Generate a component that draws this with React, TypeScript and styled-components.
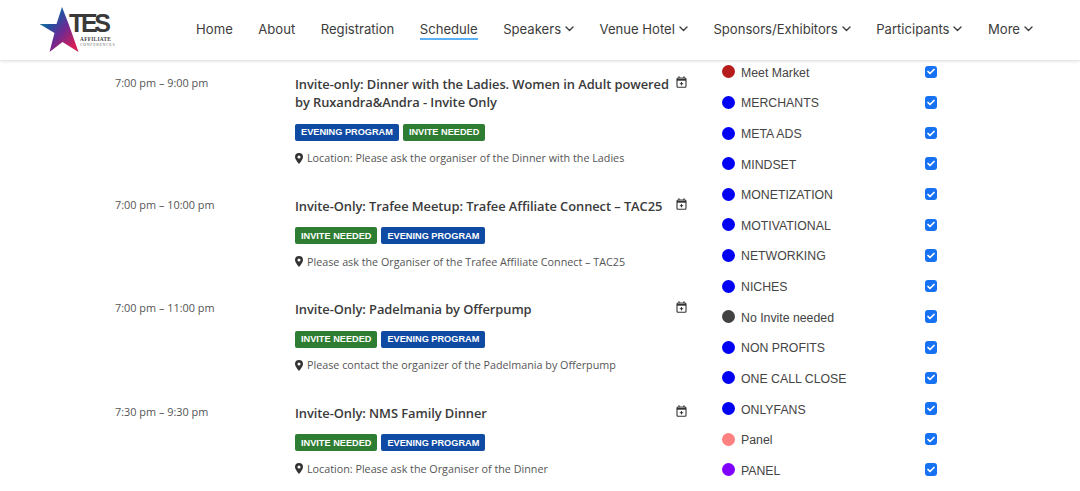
import React from "react";
import styled, { createGlobalStyle } from "styled-components";

const Global = createGlobalStyle`
  html, body { margin: 0; padding: 0; background: #fff; overflow: hidden; }
  #root { width: 1080px; height: 491px; overflow: hidden; }
`;

const Page = styled.div`
  display: flex;
  flex-direction: column;
  height: 491px;
  overflow: hidden;
`;

const Header = styled.header`
  flex: none;
  height: 60px;
  display: flex;
  align-items: center;
  padding: 0 47px 0 38px;
  background: #fff;
  box-shadow: 0 1px 3px rgba(0, 0, 0, 0.16);
  position: relative;
  z-index: 2;
`;

const LogoSvg = styled.svg`
  flex: none;
  width: 84px;
  height: 60px;
`;

const Nav = styled.nav`
  flex: 1;
  display: flex;
  justify-content: flex-end;
  gap: 25.5px;
`;

const NavItem = styled.a<{ $active?: boolean }>`
  display: inline-flex;
  align-items: center;
  gap: 4px;
  height: 20px;
  font: 400 13.1px "Inter", "Liberation Sans", sans-serif;
  color: #3c3c3c;
  white-space: nowrap;
  border-bottom: 2px solid ${(p) => (p.$active ? "#5cb0f5" : "transparent")};
  box-sizing: border-box;
`;

const Main = styled.main`
  flex: 1;
  min-height: 0;
  display: flex;
  padding-left: 115px;
  overflow: hidden;
`;

const Schedule = styled.section`
  flex: none;
  width: 571.5px;
  padding-top: 14.5px;
`;

const Row = styled.article`
  display: grid;
  grid-template-columns: 180px 1fr 13px;
  padding-bottom: 30.4px;
`;

const Time = styled.div`
  font: 400 10.9px/16px "Open Sans", sans-serif;
  color: #555;
  white-space: nowrap;
`;

const Details = styled.div`
  min-width: 0;
`;

const Title = styled.h3`
  margin: 0;
  font: 600 12.9px/18.6px "Open Sans", sans-serif;
  letter-spacing: -0.07px;
  color: #3a3a3a;
`;

const Badges = styled.div`
  display: flex;
  gap: 4px;
  margin-top: 12.3px;
`;

const Badge = styled.span<{ $tone: "blue" | "green" }>`
  display: inline-flex;
  align-items: center;
  height: 17px;
  padding: 0 6px;
  border-radius: 2px;
  background: ${(p) => (p.$tone === "blue" ? "#0f4aa3" : "#2e7d32")};
  color: #fff;
  font: 700 9.2px "Liberation Sans", sans-serif;
  white-space: nowrap;
`;

const Location = styled.p`
  display: flex;
  align-items: center;
  gap: 4px;
  margin: 9.2px 0 0;
  font: 400 10.75px/16px "Open Sans", sans-serif;
  color: #555;
  white-space: nowrap;
`;

const PinIcon = styled.svg`
  flex: none;
  width: 8px;
  height: 11px;
  fill: #333;
`;

const CalIcon = styled.svg`
  justify-self: end;
  margin-top: 1px;
  width: 11px;
  height: 12px;
`;

const Sidebar = styled.aside`
  flex: none;
  width: 215px;
  margin-left: 35.5px;
  margin-top: -2.5px;
  display: flex;
  flex-direction: column;
`;

const FilterRow = styled.label`
  flex: none;
  height: 30.62px;
  display: flex;
  align-items: center;
  gap: 6px;
  font: 400 12.3px "Liberation Sans", sans-serif;
  color: #444;
`;

const Dot = styled.span<{ $color: string }>`
  flex: none;
  width: 13px;
  height: 13px;
  border-radius: 50%;
  background: ${(p) => p.$color};
  margin-top: -2px;
`;

const FilterName = styled.span`
  flex: 1;
`;

const Check = styled.span`
  flex: none;
  width: 12.5px;
  height: 12.5px;
  margin-top: -2px;
  border-radius: 3px;
  background: #1672f3;
  display: flex;
  align-items: center;
  justify-content: center;
`;

const Chevron = () => (
  <svg width="9" height="6" viewBox="0 0 9 6" fill="none" stroke="#3c3c3c" strokeWidth="1.4" strokeLinecap="round" strokeLinejoin="round">
    <path d="M1 1l3.5 3.5L8 1" />
  </svg>
);

const Pin = () => (
  <PinIcon viewBox="0 0 8 11">
    <path fillRule="evenodd" d="M4 0a4 4 0 0 1 4 4c0 2.6-4 7-4 7S0 6.600 0 4a4 4 0 0 1 4-4zm0 2.500a1.500 1.500 0 1 0 0 3 1.500 1.500 0 0 0 0-3z" />
  </PinIcon>
);

const Cal = () => (
  <CalIcon viewBox="0 0 11 12" fill="none" stroke="#333">
    <rect x="1" y="2" width="9" height="9.300" rx="1" strokeWidth="1.100" />
    <path d="M1 3.800h9" strokeWidth="1.800" />
    <path d="M3 .3v2M8 .3v2" strokeWidth="1.100" />
    <path d="M5.500 6v3.400M3.800 7.700h3.400" strokeWidth="1" />
  </CalIcon>
);

const Logo = () => (
  <LogoSvg viewBox="0 0 84 60">
    <defs>
      <linearGradient id="star" x1="5%" y1="12%" x2="85%" y2="90%">
        <stop offset="0" stopColor="#1f9aa0" />
        <stop offset="0.3" stopColor="#1c55a0" />
        <stop offset="0.6" stopColor="#6a2a94" />
        <stop offset="1" stopColor="#d41f55" />
      </linearGradient>
    </defs>
    <path d="M24 7l7 18 9.500 27-16-10-13 10 5-19-15-9h17z" fill="url(#star)" />
    <text x="31" y="32" fontFamily="Liberation Sans, sans-serif" fontWeight="700" fontSize="25" letterSpacing="-3.300" fill="#3a3a3a">TES</text>
    <text x="42" y="41" fontFamily="Liberation Serif, serif" fontWeight="700" fontSize="5.300" letterSpacing="0.300" fill="#444">AFFILIATE</text>
    <text x="42" y="46" fontFamily="Liberation Serif, serif" fontSize="3.800" letterSpacing="0.750" fill="#666">CONFERENCES</text>
  </LogoSvg>
);

const nav: { label: string; active?: boolean; menu?: boolean }[] = [
  { label: "Home" },
  { label: "About" },
  { label: "Registration" },
  { label: "Schedule", active: true },
  { label: "Speakers", menu: true },
  { label: "Venue Hotel", menu: true },
  { label: "Sponsors/Exhibitors", menu: true },
  { label: "Participants", menu: true },
  { label: "More", menu: true },
];

type Tone = "blue" | "green";
const EVENING = { text: "EVENING PROGRAM", tone: "blue" as Tone };
const INVITE = { text: "INVITE NEEDED", tone: "green" as Tone };

const events = [
  {
    time: "7:00 pm – 9:00 pm",
    title: "Invite-only: Dinner with the Ladies. Women in Adult powered by Ruxandra&Andra - Invite Only",
    badges: [EVENING, INVITE],
    location: "Location: Please ask the organiser of the Dinner with the Ladies",
  },
  {
    time: "7:00 pm – 10:00 pm",
    title: "Invite-Only: Trafee Meetup: Trafee Affiliate Connect – TAC25",
    badges: [INVITE, EVENING],
    location: "Please ask the Organiser of the Trafee Affiliate Connect – TAC25",
  },
  {
    time: "7:00 pm – 11:00 pm",
    title: "Invite-Only: Padelmania by Offerpump",
    badges: [INVITE, EVENING],
    location: "Please contact the organizer of the Padelmania by Offerpump",
  },
  {
    time: "7:30 pm – 9:30 pm",
    title: "Invite-Only: NMS Family Dinner",
    badges: [INVITE, EVENING],
    location: "Location: Please ask the Organiser of the Dinner",
  },
];

const filters = [
  ["Meet Market", "#b71c1c"],
  ["MERCHANTS", "#0000f5"],
  ["META ADS", "#0000f5"],
  ["MINDSET", "#0000f5"],
  ["MONETIZATION", "#0000f5"],
  ["MOTIVATIONAL", "#0000f5"],
  ["NETWORKING", "#0000f5"],
  ["NICHES", "#0000f5"],
  ["No Invite needed", "#424242"],
  ["NON PROFITS", "#0000f5"],
  ["ONE CALL CLOSE", "#0000f5"],
  ["ONLYFANS", "#0000f5"],
  ["Panel", "#ff8080"],
  ["PANEL", "#8000ff"],
];

export default function App() {
  return (
    <Page>
      <Global />
      <Header>
        <Logo />
        <Nav>
          {nav.map((n) => (
            <NavItem key={n.label} $active={n.active}>
              {n.label}
              {n.menu && <Chevron />}
            </NavItem>
          ))}
        </Nav>
      </Header>
      <Main>
        <Schedule>
          {events.map((e) => (
            <Row key={e.title}>
              <Time>{e.time}</Time>
              <Details>
                <Title>{e.title}</Title>
                <Badges>
                  {e.badges.map((b) => (
                    <Badge key={b.text} $tone={b.tone}>{b.text}</Badge>
                  ))}
                </Badges>
                <Location>
                  <Pin />
                  {e.location}
                </Location>
              </Details>
              <Cal />
            </Row>
          ))}
        </Schedule>
        <Sidebar>
          {filters.map(([name, color]) => (
            <FilterRow key={name}>
              <Dot $color={color} />
              <FilterName>{name}</FilterName>
              <Check>
                <svg width="8" height="7" viewBox="0 0 8 7" fill="none" stroke="#fff" strokeWidth="1.700" strokeLinecap="round" strokeLinejoin="round">
                  <path d="M1 3.500l2 2L7 1.500" />
                </svg>
              </Check>
            </FilterRow>
          ))}
        </Sidebar>
      </Main>
    </Page>
  );
}
